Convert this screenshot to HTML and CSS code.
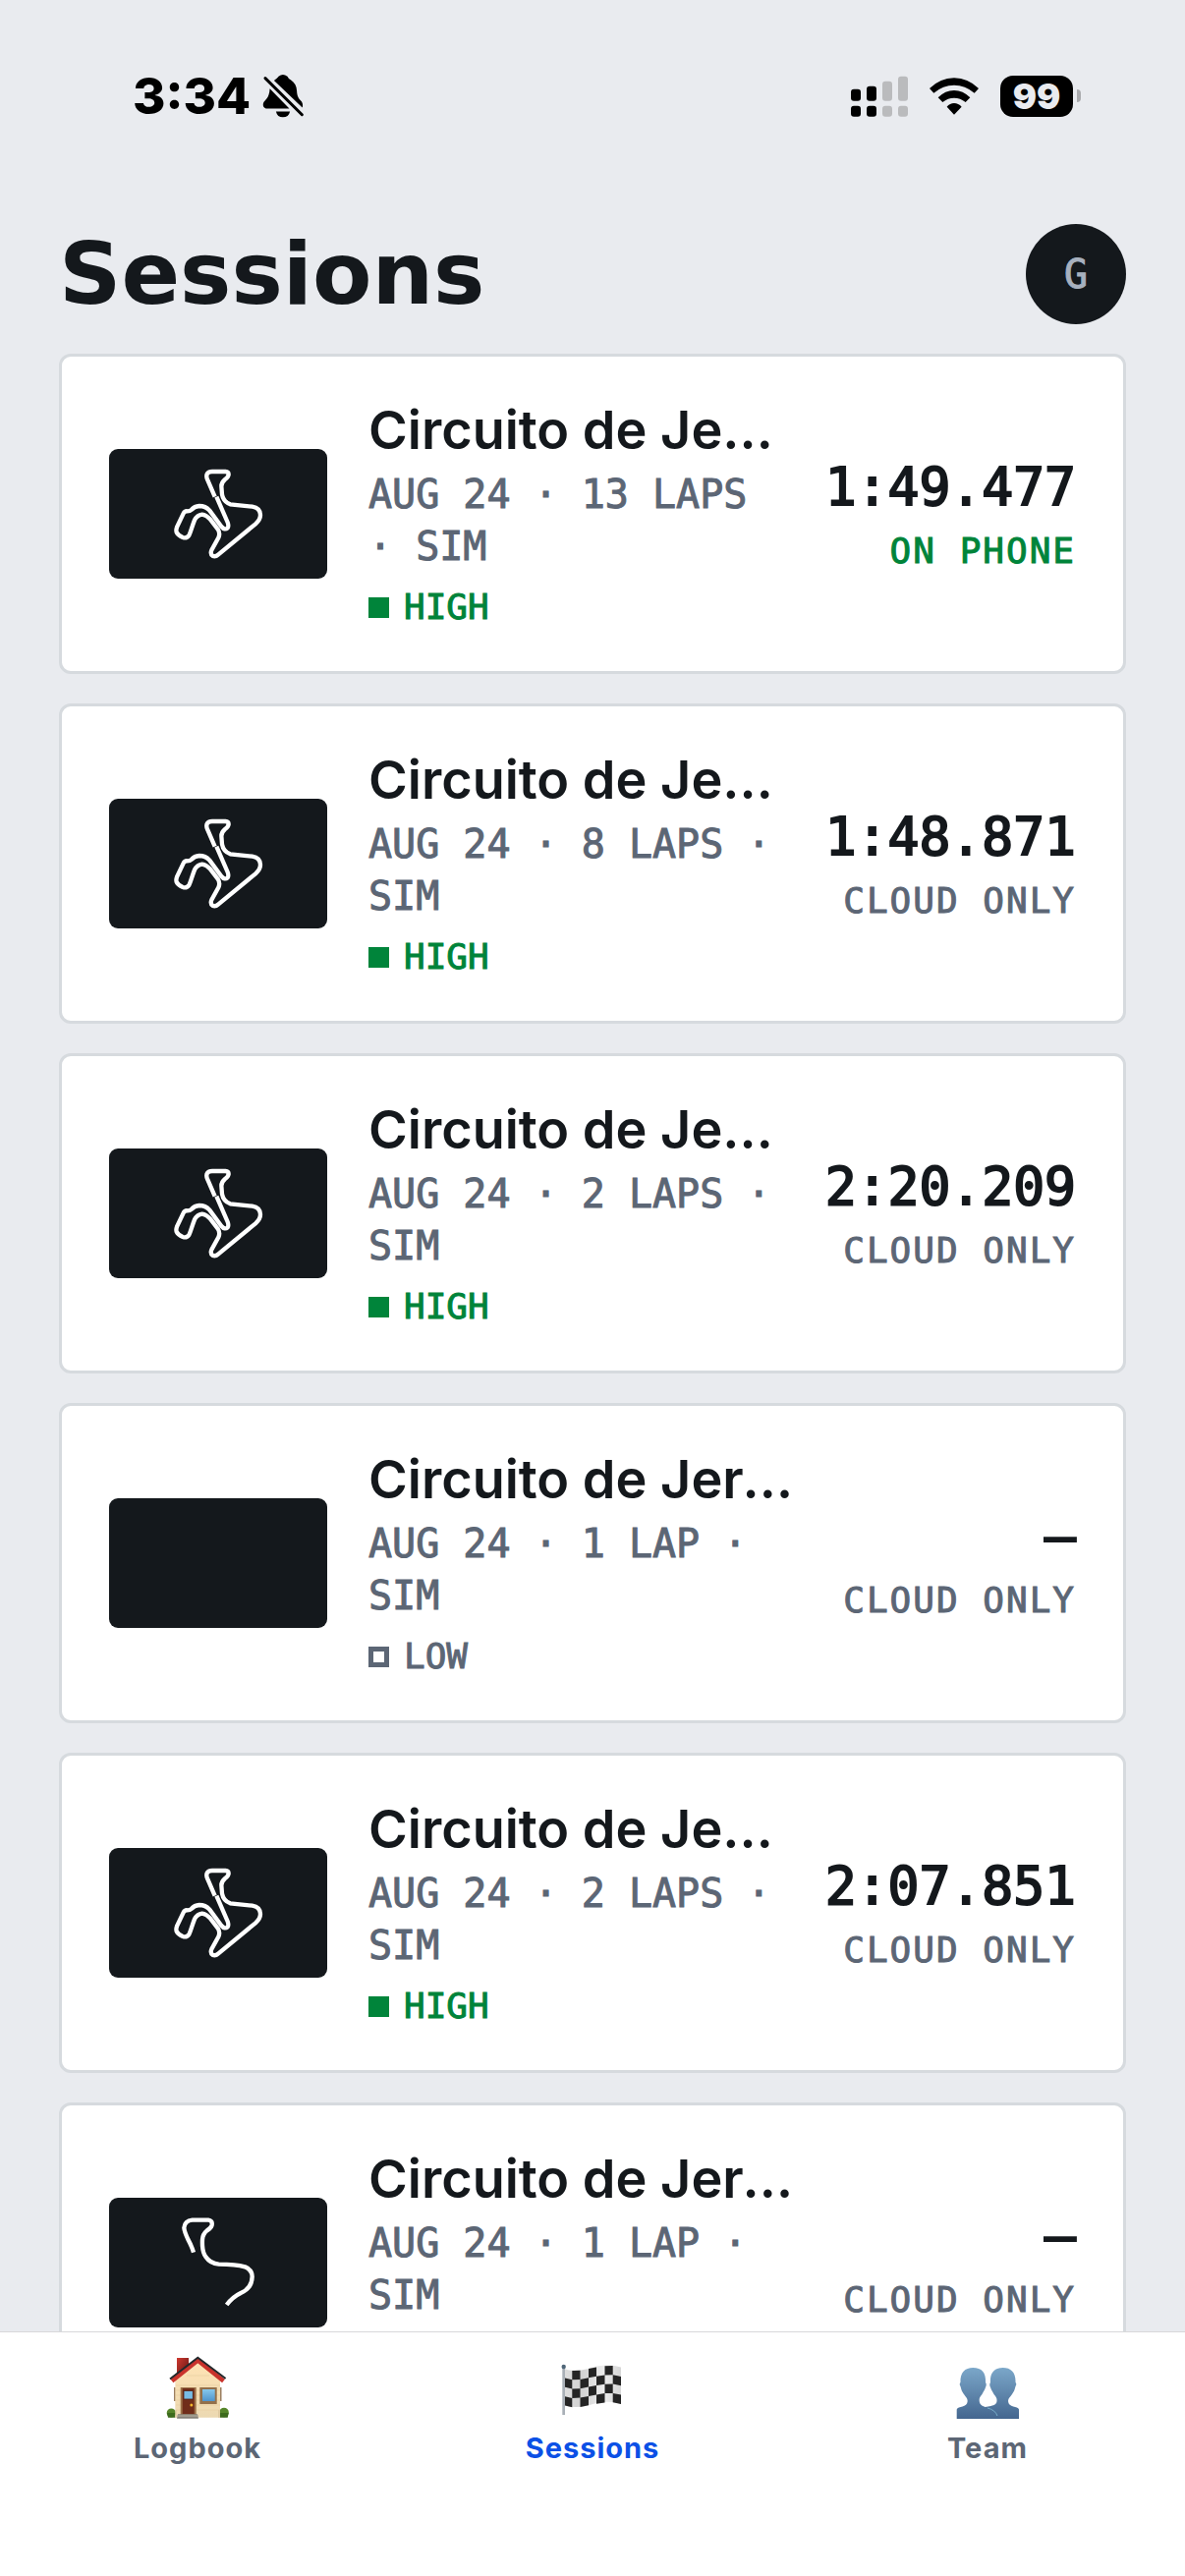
FILE: index.html
```html
<!DOCTYPE html>
<html lang="en">
<head>
<meta charset="utf-8">
<meta name="viewport" content="width=device-width, initial-scale=1">
<title>Sessions</title>
<link rel="stylesheet" href="styles.css">
</head>
<body>
<svg class="defs" aria-hidden="true">
  <symbol id="track" viewBox="213 351 666 396">
    <path class="trace" d="M536 497L514 446Q508 434 513 426Q517 420 528 420L568 420Q578 421 578 429Q577 437 567 444Q556 453 556 465L558 490Q562 512 583 520L650 527Q674 531 675 552Q675 567 660 580L547 673Q538 681 530 678Q521 672 526 660L547 622Q553 608 545 596L522 566Q510 552 497 551Q482 553 474 568C466 588 462 606 457 615Q450 625 438 621Q424 615 419 605Q417 598 420 590L440 548Q444 540 452 541Q460 541 464 537Q474 526 488 525Q508 525 520 539L556 588Q566 600 575 592Q579 587 575 575L541 497"/>
  </symbol>
  <symbol id="track-partial" viewBox="63 111 666 396">
    <path class="trace" d="M321 278Q315 258 304 238Q293 215 292 203Q294 181 317 179L366 179Q379 181 377 194Q375 203 362 211Q349 222 348 238Q346 275 358 291Q372 312 398 314Q450 314 478 322Q500 332 500 352Q499 388 465 402Q440 414 422 438"/>
  </symbol>
</svg>

<div class="status-bar">
  <div class="status-left">
    <span class="clock">3:34</span>
    <svg class="bell" viewBox="498 76 128 136" role="img" aria-label="Silent">
      <path d="M533 97C540 91 544 89 547 84Q560 74 574 84Q577 91 585 96Q601 106 603 128C604 148 609 152 618 162Q623 170 620 180Z"/>
      <path d="M520 122L580 183H508Q497 180 500 167C504 155 518 155 520 122Z"/>
      <path d="M539 192H582Q578 210 560 210Q543 210 539 192Z"/>
      <path d="M506 90L619 202" stroke="#000" stroke-width="9" stroke-linecap="round"/>
    </svg>
  </div>
  <div class="status-right">
    <svg class="signal" viewBox="135 80 174 124" role="img" aria-label="Signal">
      <rect x="135" y="120" width="30" height="36" rx="9"/><rect x="183" y="111" width="30" height="45" rx="9"/>
      <rect x="135" y="171" width="30" height="33" rx="9"/><rect x="183" y="171" width="30" height="33" rx="9"/>
      <g fill="#babbbd"><rect x="231" y="96" width="30" height="60" rx="9"/><rect x="279" y="81" width="30" height="75" rx="9"/>
      <rect x="231" y="171" width="30" height="33" rx="9"/><rect x="279" y="171" width="30" height="33" rx="9"/></g>
    </svg>
    <svg class="wifi" viewBox="376 80 150 124" role="img" aria-label="Wi-Fi">
      <path d="M376 118Q408 87 451 86Q494 87 526 118L513 132Q485 108 451 108Q417 108 389 132Z"/>
      <path d="M402 146Q424 124 451 124Q478 124 500 146L486 160Q470 147 451 147Q432 147 416 160Z"/>
      <path d="M429 174Q438 163 451 163Q464 163 474 174L451 198Z"/>
    </svg>
    <div class="battery"><span class="battery-level">99</span><span class="battery-tip"></span></div>
  </div>
</div>

<header class="header">
  <h1 class="title">Sessions</h1>
  <button class="avatar" type="button" aria-label="Account">G</button>
</header>

<main class="content">
  <ul class="sessions">
    <li class="card">
      <svg class="thumb"><use href="#track"/></svg>
      <div class="info">
        <h2 class="name">Circuito de Jerez</h2>
        <p class="meta">AUG 24 · 13 LAPS · SIM</p>
        <p class="quality high">HIGH</p>
      </div>
      <div class="result"><span class="time">1:49.477</span><span class="place local">ON PHONE</span></div>
    </li>
    <li class="card">
      <svg class="thumb"><use href="#track"/></svg>
      <div class="info">
        <h2 class="name">Circuito de Jerez</h2>
        <p class="meta">AUG 24 · 8 LAPS · SIM</p>
        <p class="quality high">HIGH</p>
      </div>
      <div class="result"><span class="time">1:48.871</span><span class="place">CLOUD ONLY</span></div>
    </li>
    <li class="card">
      <svg class="thumb"><use href="#track"/></svg>
      <div class="info">
        <h2 class="name">Circuito de Jerez</h2>
        <p class="meta">AUG 24 · 2 LAPS · SIM</p>
        <p class="quality high">HIGH</p>
      </div>
      <div class="result"><span class="time">2:20.209</span><span class="place">CLOUD ONLY</span></div>
    </li>
    <li class="card">
      <svg class="thumb"></svg>
      <div class="info">
        <h2 class="name">Circuito de Jerez</h2>
        <p class="meta">AUG 24 · 1 LAP · SIM</p>
        <p class="quality">LOW</p>
      </div>
      <div class="result"><span class="time">—</span><span class="place">CLOUD ONLY</span></div>
    </li>
    <li class="card">
      <svg class="thumb"><use href="#track"/></svg>
      <div class="info">
        <h2 class="name">Circuito de Jerez</h2>
        <p class="meta">AUG 24 · 2 LAPS · SIM</p>
        <p class="quality high">HIGH</p>
      </div>
      <div class="result"><span class="time">2:07.851</span><span class="place">CLOUD ONLY</span></div>
    </li>
    <li class="card">
      <svg class="thumb"><use href="#track-partial"/></svg>
      <div class="info">
        <h2 class="name">Circuito de Jerez</h2>
        <p class="meta">AUG 24 · 1 LAP · SIM</p>
        <p class="quality">LOW</p>
      </div>
      <div class="result"><span class="time">—</span><span class="place">CLOUD ONLY</span></div>
    </li>
  </ul>
</main>

<nav class="tabs">
  <a class="tab" href="#logbook">
    <svg class="tab-icon" viewBox="1 0 64 64" aria-hidden="true">
      <defs>
        <linearGradient id="wall" x1="0" y1="0" x2="0" y2="1"><stop offset="0" stop-color="#ffe3b4"/><stop offset="1" stop-color="#ecd9b2"/></linearGradient>
        <linearGradient id="brick" x1="0" y1="0" x2="1" y2="1"><stop offset="0" stop-color="#d0382f"/><stop offset="1" stop-color="#5e1512"/></linearGradient>
        <linearGradient id="pane" x1="0" y1="0" x2="0" y2="1"><stop offset="0" stop-color="#86c8ec"/><stop offset="1" stop-color="#4f94cc"/></linearGradient>
      </defs>
      <path d="M12 2h12v10L12 21z" fill="url(#brick)"/>
      <path d="M9 32h2v14H9zM55.500 32h2v14h-2z" fill="#9b7f61"/>
      <path d="M33.300 5L10.300 25V62.700H56V25z" fill="url(#wall)"/>
      <path d="M11 30H56M11 35H56M11 40H56M11 45H56M11 50H56M11 55H56M22 20H45" stroke="#e5cc9e" stroke-width=".6"/>
      <circle cx="6.300" cy="58" r="4.600" fill="#55852a"/><circle cx="60" cy="57.500" r="4.800" fill="#55852a"/>
      <path d="M2 58h8.300v4.700H3zM56 58h8.700l-1 4.700H56z" fill="#3c6a1c"/>
      <path d="M10.300 55h1.500v7.700h-1.500zM54 55h2v7.700h-2z" fill="#dfcba2"/>
      <rect x="15.700" y="32" width="16" height="28" fill="#9b7048"/><rect x="17.700" y="33" width="12" height="26" fill="#702d1a"/>
      <rect x="19" y="35.500" width="9.300" height="8.500" fill="#78bce5" stroke="#4f1f12" stroke-width=".8"/><circle cx="26.800" cy="50" r="1.500" fill="#f4b62b"/>
      <rect x="35.300" y="32" width="17.400" height="17" fill="#93704b"/><rect x="38" y="34" width="12.700" height="12" fill="url(#pane)"/>
      <path d="M13 59.300h20l1 4.400H12z" fill="#858077"/><path d="M12 61h22" stroke="#bdb6a7"/>
      <path d="M7 25.500L33.300 4.500L59.500 25.500" fill="none" stroke="#c9332c" stroke-width="4.500"/>
      <path d="M5 23.500L33.300 1.800L61.600 23" fill="none" stroke="#23282b" stroke-width="2"/>
    </svg>
    <span>Logbook</span>
  </a>
  <a class="tab active" href="#sessions" aria-current="page">
    <svg class="tab-icon" viewBox="0 0 64 64" aria-hidden="true">
      <defs><linearGradient id="cloth"><stop offset="0" stop-color="#dedede"/><stop offset=".3" stop-color="#d2d2d2"/><stop offset=".7" stop-color="#ececec"/><stop offset="1" stop-color="#d6d6d6"/></linearGradient></defs>
      <path d="M3 13Q12 17 28 13Q46 7 61 11.500V49Q48 44 28 50.200Q14 54 3 50.200z" fill="url(#cloth)"/>
      <path fill="#252525" d="M11.300 15l8.200-.3v9.300l-8.200.3zM11.300 33.600l8.200-.3v9.300l-8.200.3zM28 13l8-1.500v9.300l-8 1.500zM28 31.600l8-1.500v9.300l-8 1.500zM44.500 10.200l8.200-.2v9.300l-8.200.2zM44.500 28.800l8.200-.2v9.300l-8.200.2zM3 22.300l8.300 2v9.300l-8.300-2zM3 40.900l8.300 2v9.300l-8.300-2zM19.500 24l8.500-1.700v9.300l-8.500 1.700zM19.500 42.600l8.500-1.700v9.300l-8.500 1.700zM36 20.800l8.500-1.300v9.300l-8.500 1.300zM36 39.400l8.500-1.300v9.300l-8.500 1.300zM52.700 19.300l8.300 1.700v9.300l-8.300-1.700zM52.700 37.900l8.300 1.700v9.300l-8.300-1.700z"/>
      <rect x="1.300" y="11" width="2.700" height="49" fill="#a9b0b7"/><circle cx="2.700" cy="11" r="2.200" fill="#4f6678"/>
    </svg>
    <span>Sessions</span>
  </a>
  <a class="tab" href="#team">
    <svg class="tab-icon" viewBox="0 0 64 64" aria-hidden="true">
      <defs>
        <linearGradient id="bust" x1="0" y1="0" x2="0" y2="1"><stop offset="0" stop-color="#7ba7c9"/><stop offset="1" stop-color="#44668f"/></linearGradient>
      </defs>
      <path fill="url(#bust)" d="M64 64V54.500C63 50.500 53.300 53 53 46C53 43 55 42 57 39C59 36 59.500 35 60.500 31C61.600 29 61.500 28 60.500 27C61 17 56 12 47.700 12C39 12 34.300 17 35 27C34 28 34 30 35 32C36 35 37 36 38.500 39C41 42 41.700 43 41.500 46C41 53 28 50 24 54.500V64z"/>
      <path fill="url(#bust)" d="M.7 64V54.500C2 50.500 11.400 53 11.700 46C11.700 43 10 42 8 39C6 36 5.500 35 4.500 31C3.400 29 3.500 28 4.500 27C4 17 9 12 17.300 12C26 12 30.700 17 30 27C31 28 31 30 30 32C29 35 28 36 26.500 39C24 42 23.500 43 23.700 46C24 52 32 52 36 54Q41 57 42 64z"/>
      <path d="M32 53Q40 55 42 61" fill="none" stroke="#79aecb" stroke-width="1"/>
    </svg>
    <span>Team</span>
  </a>
</nav>
</body>
</html>
```
FILE: styles.css
```css
:root {
  --bg: #e9ebef;
  --ink: #14181c;
  --muted: #5c6675;
  --green: #00843a;
  --blue: #0b50e6;
  --line: #d6dade;
  --sans: Inter, "Liberation Sans", sans-serif;
  --mono: "DejaVu Sans Mono", monospace;
}

*,
*::before {
  box-sizing: border-box;
  margin: 0;
  padding: 0;
}

body {
  display: flex;
  flex-direction: column;
  height: 100vh;
  background: var(--bg);
  color: var(--ink);
  font-family: var(--sans);
}

.defs {
  position: absolute;
  width: 0;
  height: 0;
}

.trace {
  fill: none;
  stroke: #fff;
  stroke-width: 13;
}

/* Status bar */
.status-bar {
  display: flex;
  flex: none;
  align-items: center;
  justify-content: space-between;
  height: 195px;
  padding: 0 106px 0 135px;
}

.status-left {
  display: flex;
  align-items: center;
  gap: 12px;
}

.clock {
  color: #000;
  font-size: 51px;
  font-weight: 800;
  line-height: 60px;
}

.bell {
  width: 43px;
  height: 45px;
}

.status-right {
  display: flex;
  align-items: center;
  gap: 22px;
}

.signal {
  width: 58px;
  height: 42px;
}

.wifi {
  width: 50px;
  height: 42px;
}

.battery {
  display: flex;
  align-items: center;
  gap: 4px;
}

.battery-level {
  width: 74px;
  border-radius: 13px;
  background: #000;
  color: var(--bg);
  font-size: 36px;
  font-weight: 900;
  line-height: 42px;
  text-align: center;
}

.battery-tip {
  width: 4px;
  height: 13px;
  border-radius: 0 4px 4px 0;
  background: #a9aaad;
}

/* Header */
.header {
  display: flex;
  flex: none;
  align-items: center;
  justify-content: space-between;
  padding: 33px 60px 30px;
}

.title {
  font-family: "DejaVu Sans", sans-serif;
  font-size: 88px;
  font-weight: 700;
  line-height: 96px;
}

.avatar {
  width: 102px;
  height: 102px;
  border: 0;
  border-radius: 50%;
  background: var(--ink);
  color: #a7b0be;
  font: 400 40px var(--mono);
}

/* Session list */
.content {
  flex: 1;
  min-height: 0;
  padding: 0 60px;
  overflow-y: auto;
  scrollbar-width: none;
}

.sessions {
  display: flex;
  flex-direction: column;
  gap: 30px;
  padding-bottom: 30px;
  list-style: none;
}

.card {
  display: flex;
  align-items: center;
  gap: 42px;
  padding: 42px 48px;
  border: 3px solid var(--line);
  border-radius: 12px;
  background: #fff;
}

.thumb {
  flex: none;
  width: 222px;
  height: 132px;
  border-radius: 9px;
  background: var(--ink);
}

.info {
  flex: 1;
  min-width: 0;
}

.name {
  overflow: hidden;
  font-size: 54px;
  font-weight: 600;
  line-height: 66px;
  text-overflow: ellipsis;
  white-space: nowrap;
}

.meta {
  margin-top: 6px;
  color: var(--muted);
  font-family: var(--mono);
  font-size: 40px;
  line-height: 53px;
}

.quality {
  display: flex;
  align-items: center;
  gap: 15px;
  margin-top: 12px;
  color: var(--muted);
  font-family: var(--mono);
  font-size: 36px;
  line-height: 46px;
}

.quality::before {
  width: 21px;
  height: 21px;
  border: 5px solid currentColor;
  content: "";
}

.quality.high {
  color: var(--green);
}

.quality.high::before {
  background: currentColor;
}

.result {
  display: flex;
  flex: none;
  flex-direction: column;
  align-items: flex-end;
  gap: 6px;
  font-family: var(--mono);
}

.time {
  font-size: 53px;
  line-height: 70px;
}

.place {
  color: var(--muted);
  font-size: 36px;
  letter-spacing: 2px;
  line-height: 48px;
}

.place.local {
  color: var(--green);
}

.avatar,
.meta,
.quality,
.place {
  -webkit-text-stroke: 1px currentColor;
}

.time {
  -webkit-text-stroke: 2px currentColor;
}

/* Tab bar */
.tabs {
  display: flex;
  flex: none;
  padding: 24px 0 112px;
  border-top: 1px solid #d8d8da;
  background: #fff;
}

.tab {
  display: flex;
  flex: 1;
  flex-direction: column;
  align-items: center;
  gap: 12px;
  color: var(--muted);
  font-size: 29px;
  font-weight: 700;
  letter-spacing: 1px;
  line-height: 36px;
  text-decoration: none;
}

.tab.active {
  color: var(--blue);
}

.tab-icon {
  width: 64px;
  height: 64px;
}
```
